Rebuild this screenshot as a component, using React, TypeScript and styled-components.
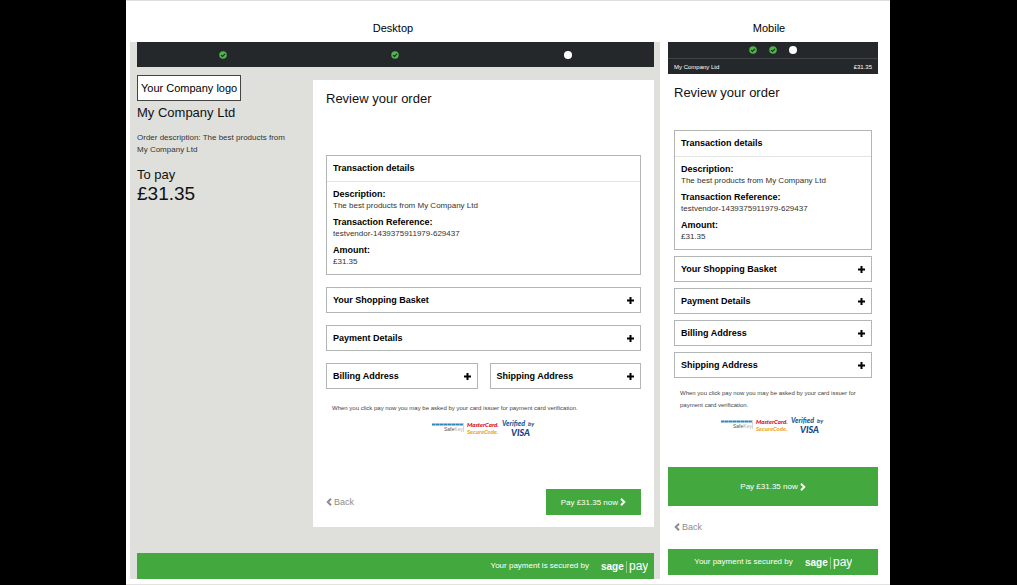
import React from "react";
import styled, { createGlobalStyle } from "styled-components";

const GlobalStyle = createGlobalStyle`
  *, *::before, *::after { box-sizing: border-box; }
  body {
    margin: 0;
    background: #000;
    color: #111;
    font-family: "Liberation Sans", Arial, sans-serif;
    font-size: 8px;
    line-height: 12px;
  }
  h1, h2, h3, p, dl, dd, ol { margin: 0; padding: 0; }
  h1, h2, h3 { font-weight: 400; }
  button { font-family: inherit; cursor: pointer; }
  svg { display: block; flex: none; }
`;

const Page = styled.main`
  min-height: 100vh;
  margin: 0 127px 0 126px;
  padding: 0 12px 5px 0;
  background: #fff;
  border-top: 1px solid #ddd;
  border-bottom: 1px solid #e2e2e2;
  display: flex;
  align-items: stretch;
`;

const DesktopColumn = styled.section`
  flex: 1;
  min-width: 0;
  display: flex;
  flex-direction: column;
`;

const MobileColumn = styled.section`
  flex: 0 0 218px;
`;

const ColumnTitle = styled.h1`
  height: 41px;
  padding-top: 19px;
  color: #000;
  font-size: 11px;
  line-height: 16px;
  text-align: center;
`;

const DesktopFrame = styled.div`
  flex: 1;
  margin-left: 4px;
  padding: 0 6px 0 7px;
  background: #dfe0db;
  display: flex;
  flex-direction: column;
`;

const MobileFrame = styled.div`
  padding-left: 8px;
`;

const Steps = styled.ol<{ $compact?: boolean }>`
  list-style: none;
  height: ${(p) => (p.$compact ? "16px" : "25px")};
  background: #25282a;
  display: flex;
  align-items: center;
  justify-content: center;
  gap: ${(p) => (p.$compact ? "12px" : "0")};
`;

const Step = styled.li<{ $wide?: boolean }>`
  flex: ${(p) => (p.$wide ? "1" : "none")};
  display: flex;
  justify-content: center;
`;

const MobileSummary = styled.div`
  height: 16px;
  padding: 0 6px;
  background: #25282a;
  border-top: 1px solid #404345;
  color: #fff;
  font-size: 6px;
  display: flex;
  align-items: center;
  justify-content: space-between;
`;

const DesktopBody = styled.div`
  flex: 1;
  display: flex;
  align-items: flex-start;
  padding: 8px 0 25px;
`;

const Aside = styled.aside`
  flex: 0 0 176px;
  padding-right: 16px;
`;

const CompanyLogo = styled.div`
  width: max-content;
  height: 26px;
  padding: 0 3px;
  border: 1px solid #444;
  background: #fff;
  color: #000;
  font-size: 11px;
  line-height: 24px;
`;

const Subheading = styled.h2`
  font-size: 13px;
  line-height: 16px;
`;

const CompanyName = styled(Subheading)`
  margin-top: 4px;
`;

const OrderText = styled.p`
  margin: 11px 0;
  color: #333;
`;

const Total = styled.p`
  font-size: 19px;
  line-height: 22px;
`;

const Card = styled.div`
  flex: 1;
  min-width: 0;
  margin-top: 5px;
  padding: 11px 13px 12px;
  background: #fff;
`;

const MobileCard = styled.div`
  padding: 11px 6px 0;
`;

const PanelList = styled.div<{ $compact?: boolean }>`
  margin-top: ${(p) => (p.$compact ? "29px" : "48px")};
  display: grid;
  grid-template-columns: ${(p) => (p.$compact ? "1fr" : "1fr 1fr")};
  gap: ${(p) => (p.$compact ? "6px" : "12px")};
`;

const Panel = styled.section<{ $full?: boolean }>`
  grid-column: ${(p) => (p.$full ? "1 / -1" : "auto")};
  border: 1px solid #b2b6b4;
`;

const PanelTitle = styled.h3`
  height: 25px;
  padding: 0 6px;
  color: #000;
  font-size: 9px;
  line-height: 24px;
  font-weight: 700;
`;

const PanelToggle = styled.button`
  width: 100%;
  height: 24px;
  padding: 0 6px;
  border: 0;
  background: transparent;
  color: #000;
  font-size: 9px;
  font-weight: 700;
  display: flex;
  align-items: center;
  justify-content: space-between;
`;

const Details = styled.dl`
  border-top: 1px solid #e2e4e3;
  padding: 6px;
  display: grid;
  gap: 4px;

  dt {
    color: #000;
    font-size: 9px;
    font-weight: 700;
  }
  dd { color: #333; }
`;

const Note = styled.p<{ $compact?: boolean }>`
  margin: ${(p) => (p.$compact ? "9px 6px 0" : "13px 6px 0")};
  color: #444;
  font-size: 6px;
`;

const Schemes = styled.div`
  margin-top: 6px;
  display: flex;
  justify-content: center;
`;

const Actions = styled.div`
  margin-top: 51px;
  display: flex;
  align-items: center;
  justify-content: space-between;
`;

const PayButton = styled.button<{ $block?: boolean }>`
  width: ${(p) => (p.$block ? "100%" : "auto")};
  height: ${(p) => (p.$block ? "39px" : "26px")};
  margin-top: ${(p) => (p.$block ? "32px" : "0")};
  padding: 0 15px;
  border: 0;
  background: #43a93f;
  color: #fff;
  font-size: 8px;
  display: flex;
  align-items: center;
  justify-content: center;
  gap: 2px;
`;

const BackLink = styled.a`
  width: max-content;
  color: #8c8c8c;
  font-size: 9px;
  text-decoration: none;
  display: flex;
  align-items: center;
  gap: 2px;
`;

const MobileBack = styled.nav`
  padding: 15px 6px 16px;
`;

const SecuredBar = styled.footer<{ $centered?: boolean }>`
  height: 26px;
  padding: 0 6px;
  background: #43a93f;
  color: #fff;
  display: flex;
  align-items: center;
  justify-content: ${(p) => (p.$centered ? "center" : "flex-end")};
  gap: 12px;
`;

const DoneIcon = () => (
  <svg width="8" height="8" viewBox="0 0 16 16" role="img" aria-label="Completed">
    <circle cx="8" cy="8" r="7.5" fill="#4fb54b" />
    <path d="M4.2 8.2 7 11l5-5.2" fill="none" stroke="#1d2b20" strokeWidth="2.4" />
  </svg>
);

const CurrentIcon = () => (
  <svg width="8" height="8" viewBox="0 0 16 16" role="img" aria-label="Current step">
    <circle cx="8" cy="8" r="8" fill="#fff" />
  </svg>
);

const PlusIcon = () => (
  <svg width="7" height="7" viewBox="0 0 14 14" aria-hidden="true">
    <path d="M5 0h4v5h5v4H9v5H5V9H0V5h5z" fill="#000" />
  </svg>
);

const Chevron = ({ left }: { left?: boolean }) => (
  <svg width="6" height="8" viewBox="0 0 12 16" aria-hidden="true">
    <path
      d={left ? "M10 1.5 3.500 8l6.500 6.500" : "M2 1.500 8.500 8 2 14.500"}
      fill="none"
      stroke="currentColor"
      strokeWidth="4"
    />
  </svg>
);

const SchemeLogos = () => (
  <svg width="104" height="18" viewBox="0 0 104 18" role="img" aria-label="Card verification schemes">
    <path d="M0 4.500h31" stroke="#2f86b8" strokeWidth="2" strokeDasharray="3.600 0.300" />
    <text x="12" y="11" fontSize="5" fill="#555">
      Safe<tspan fill="#aaa">Key</tspan>
    </text>
    <path d="M31.500 3v9" stroke="#bbb" strokeWidth="0.600" />
    <g fontFamily="Lato, sans-serif" fontStyle="italic" fontWeight="900">
      <text x="35" y="7" fontSize="6" fill="#d3122e">MasterCard.</text>
      <text x="35" y="14" fontSize="6" fill="#f0a51e">SecureCode.</text>
      <text x="70" y="6" fontSize="7" fill="#1b5b9e">Verified</text>
      <text x="96" y="6" fontSize="6" fill="#1b5b9e">by</text>
      <text x="79" y="16" fontSize="9" fill="#123f86">VISA</text>
    </g>
  </svg>
);

const SageLogo = () => (
  <svg width="47" height="16" viewBox="0 0 47 16" role="img" aria-label="sage pay">
    <text x="0" y="12" fontSize="10" fontWeight="700" fill="#fff">sage</text>
    <path d="M25.500 3v12" stroke="#a5d8a2" strokeWidth="0.800" />
    <text x="28" y="12" fontSize="12" fill="#fff">pay</text>
  </svg>
);

const StepList = ({ compact }: { compact?: boolean }) => (
  <Steps $compact={compact}>
    <Step $wide={!compact}><DoneIcon /></Step>
    <Step $wide={!compact}><DoneIcon /></Step>
    <Step $wide={!compact}><CurrentIcon /></Step>
  </Steps>
);

const Collapsed = ({ title, full }: { title: string; full?: boolean }) => (
  <Panel $full={full}>
    <PanelToggle type="button" aria-expanded={false}>
      {title}
      <PlusIcon />
    </PanelToggle>
  </Panel>
);

const OrderPanels = ({ compact }: { compact?: boolean }) => (
  <PanelList $compact={compact}>
    <Panel $full>
      <PanelTitle>Transaction details</PanelTitle>
      <Details>
        <div>
          <dt>Description:</dt>
          <dd>The best products from My Company Ltd</dd>
        </div>
        <div>
          <dt>Transaction Reference:</dt>
          <dd>testvendor-1439375911979-629437</dd>
        </div>
        <div>
          <dt>Amount:</dt>
          <dd>£31.35</dd>
        </div>
      </Details>
    </Panel>
    <Collapsed title="Your Shopping Basket" full />
    <Collapsed title="Payment Details" full />
    <Collapsed title="Billing Address" />
    <Collapsed title="Shipping Address" />
  </PanelList>
);

const Verification = ({ compact }: { compact?: boolean }) => (
  <>
    <Note $compact={compact}>
      When you click pay now you may be asked by your card issuer for payment card verification.
    </Note>
    <Schemes><SchemeLogos /></Schemes>
  </>
);

const Back = () => (
  <BackLink href="#back">
    <Chevron left />
    Back
  </BackLink>
);

const Pay = ({ block }: { block?: boolean }) => (
  <PayButton type="button" $block={block}>
    Pay £31.35 now
    <Chevron />
  </PayButton>
);

const Secured = ({ centered }: { centered?: boolean }) => (
  <SecuredBar $centered={centered}>
    <span>Your payment is secured by</span>
    <SageLogo />
  </SecuredBar>
);

export default function App() {
  return (
    <>
      <GlobalStyle />
      <Page>
        <DesktopColumn>
          <ColumnTitle>Desktop</ColumnTitle>
          <DesktopFrame>
            <StepList />
            <DesktopBody>
              <Aside>
                <CompanyLogo>Your Company logo</CompanyLogo>
                <CompanyName>My Company Ltd</CompanyName>
                <OrderText>Order description: The best products from My Company Ltd</OrderText>
                <Subheading>To pay</Subheading>
                <Total>£31.35</Total>
              </Aside>
              <Card>
                <Subheading>Review your order</Subheading>
                <OrderPanels />
                <Verification />
                <Actions>
                  <Back />
                  <Pay />
                </Actions>
              </Card>
            </DesktopBody>
            <Secured />
          </DesktopFrame>
        </DesktopColumn>
        <MobileColumn>
          <ColumnTitle>Mobile</ColumnTitle>
          <MobileFrame>
            <StepList compact />
            <MobileSummary>
              <span>My Company Ltd</span>
              <span>£31.35</span>
            </MobileSummary>
            <MobileCard>
              <Subheading>Review your order</Subheading>
              <OrderPanels compact />
              <Verification compact />
            </MobileCard>
            <Pay block />
            <MobileBack><Back /></MobileBack>
            <Secured centered />
          </MobileFrame>
        </MobileColumn>
      </Page>
    </>
  );
}
